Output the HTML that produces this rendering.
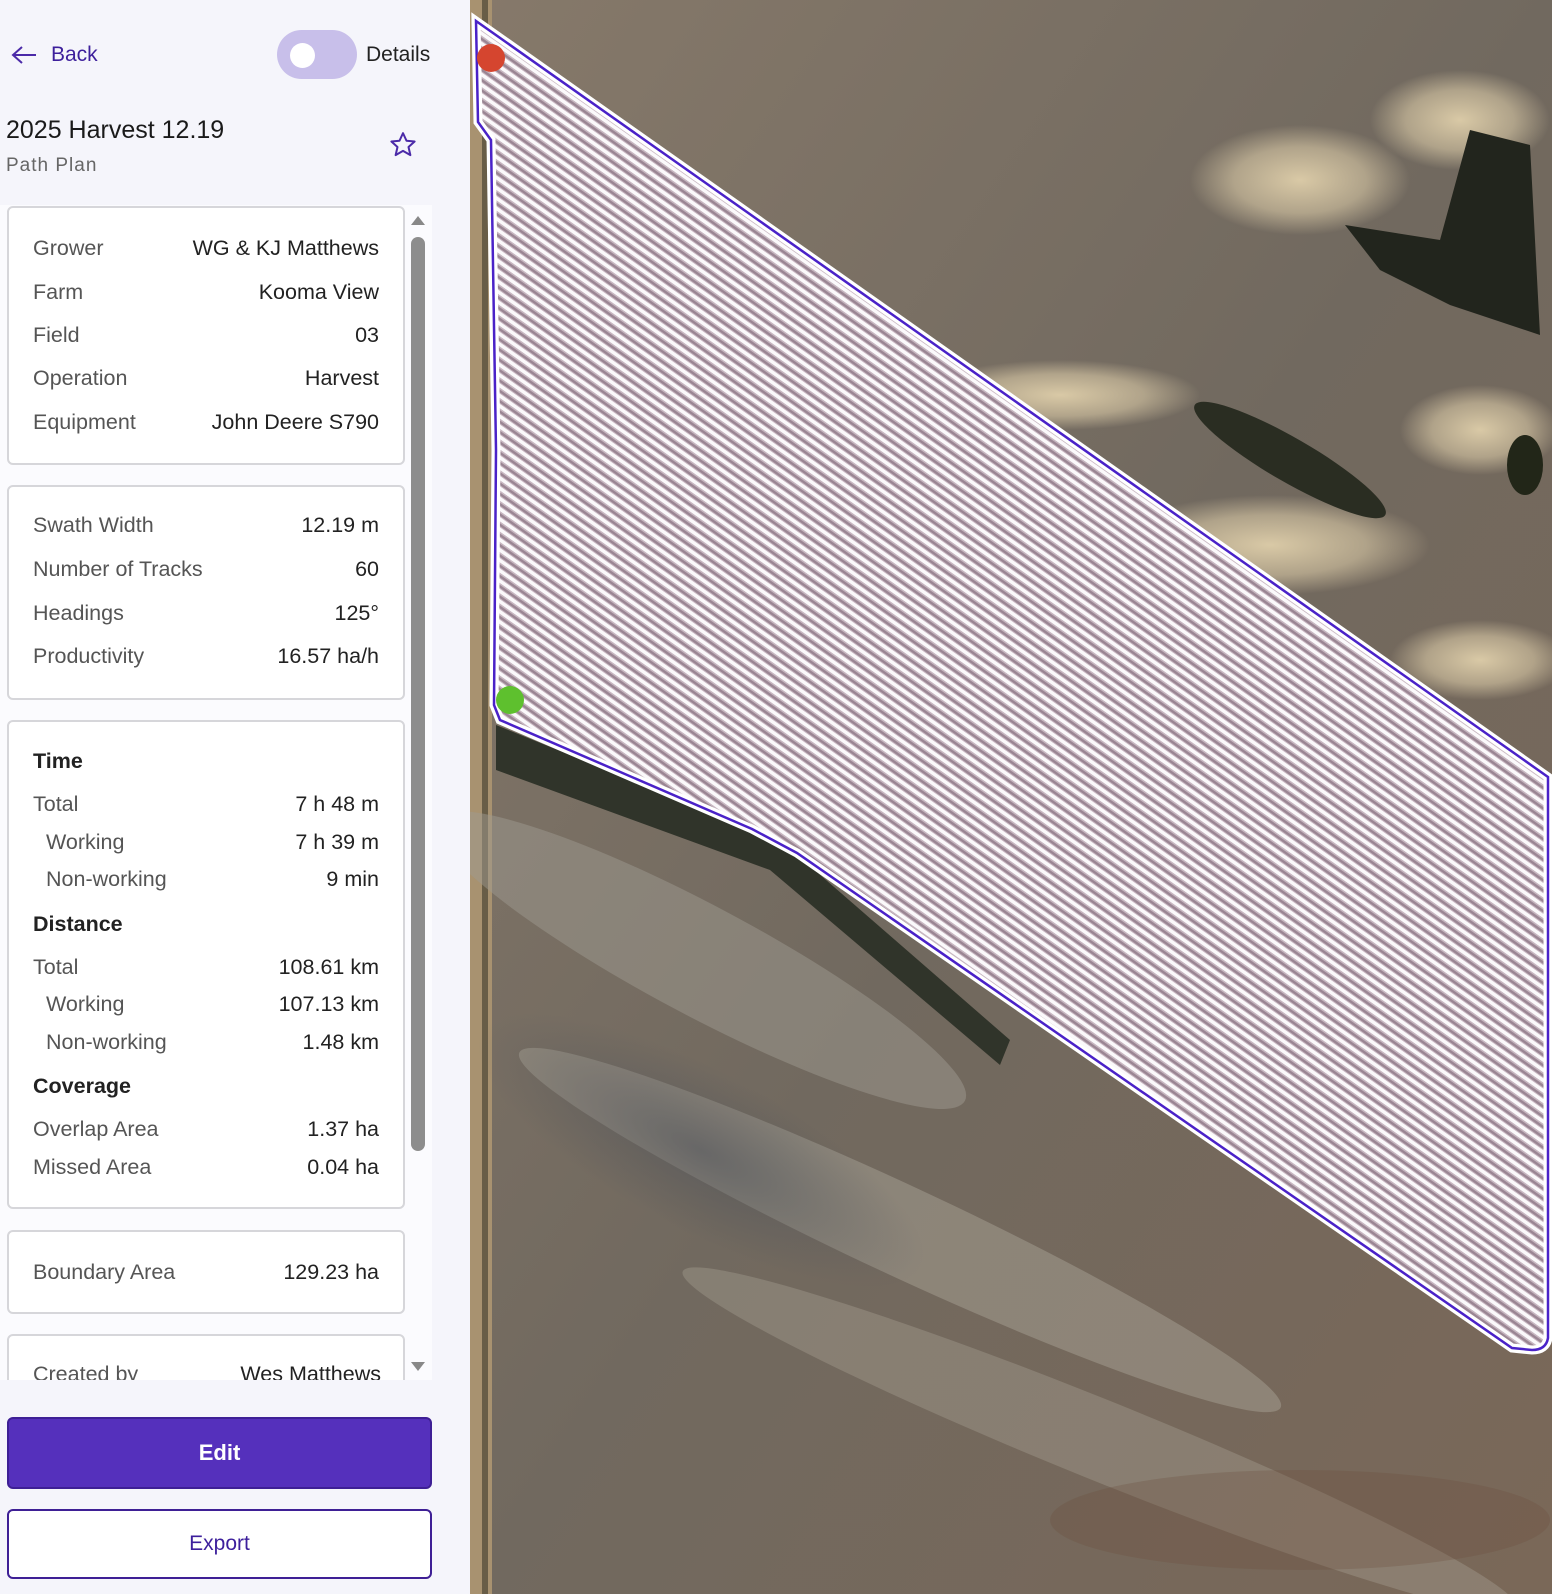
<!DOCTYPE html>
<html><head><meta charset="utf-8"><style>
*{margin:0;padding:0;box-sizing:border-box}
body{width:1552px;height:1594px;overflow:hidden;background:#f5f5fb;font-family:"Liberation Sans",sans-serif;position:relative}
.panel{position:absolute;left:0;top:0;width:470px;height:1594px;background:#f5f5fb}
.t{position:absolute;font-size:21.5px;white-space:nowrap;line-height:1}
.l{left:33px;color:#555}
.li{left:46px;color:#555}
.h{left:33px;color:#222;font-weight:bold}
.v{right:91px;color:#222;text-align:right}
.card{position:absolute;left:7px;width:398px;background:#fff;border:2px solid #d6d6da;border-radius:6px}
.map{position:absolute;left:470px;top:0;width:1082px;height:1594px;overflow:hidden}
</style></head><body>
<div class="panel">
  <svg style="position:absolute;left:10px;top:45px" width="28" height="20" viewBox="0 0 28 20"><path d="M12 2 L3 10 L12 18 M3 10 H26" stroke="#4b2aa8" stroke-width="2" fill="none"/></svg>
  <div class="t" style="left:51px;top:44px;color:#3d1f9c;font-size:21px">Back</div>
  <div style="position:absolute;left:277px;top:30px;width:80px;height:49px;border-radius:25px;background:#c8bfea"></div>
  <div style="position:absolute;left:290px;top:43px;width:25px;height:25px;border-radius:50%;background:#fff"></div>
  <div class="t" style="left:366px;top:44px;color:#222;font-size:21px">Details</div>
  <div class="t" style="left:6px;top:118px;color:#1a1a1a;font-size:25px">2025 Harvest 12.19</div>
  <div class="t" style="left:6px;top:156px;color:#666;font-size:19px;letter-spacing:1px">Path Plan</div>
  <svg style="position:absolute;left:388px;top:130px" width="30" height="30" viewBox="0 0 24 24"><path d="M12 2.5 L14.8 8.6 L21.3 9.2 L16.4 13.6 L17.9 20.1 L12 16.7 L6.1 20.1 L7.6 13.6 L2.7 9.2 L9.2 8.6 Z" fill="none" stroke="#4b2aa8" stroke-width="1.6" stroke-linejoin="round"/></svg>

  <div style="position:absolute;left:0;top:205px;width:432px;height:1175px;background:#fbfbfe;overflow:hidden">
    <div class="card" style="top:1px;height:259px"></div>
    <div class="card" style="top:280px;height:215px"></div>
    <div class="card" style="top:515px;height:489px"></div>
    <div class="card" style="top:1025px;height:84px"></div>
    <div class="card" style="top:1129px;height:100px"></div>
    <svg style="position:absolute;left:410px;top:8px" width="16" height="14"><path d="M1 12 L8 3 L15 12Z" fill="#888"/></svg>
    <div style="position:absolute;left:411px;top:32px;width:14px;height:914px;border-radius:7px;background:#8d8d8d"></div>
    <svg style="position:absolute;left:410px;top:1155px" width="16" height="14"><path d="M1 2 L8 11 L15 2Z" fill="#888"/></svg>
  </div>

  <div class="t l" style="top:238px">Grower</div><div class="t v" style="top:238px">WG &amp; KJ Matthews</div>
  <div class="t l" style="top:282px">Farm</div><div class="t v" style="top:282px">Kooma View</div>
  <div class="t l" style="top:325px">Field</div><div class="t v" style="top:325px">03</div>
  <div class="t l" style="top:368px">Operation</div><div class="t v" style="top:368px">Harvest</div>
  <div class="t l" style="top:412px">Equipment</div><div class="t v" style="top:412px">John Deere S790</div>

  <div class="t l" style="top:515px">Swath Width</div><div class="t v" style="top:515px">12.19 m</div>
  <div class="t l" style="top:559px">Number of Tracks</div><div class="t v" style="top:559px">60</div>
  <div class="t l" style="top:603px">Headings</div><div class="t v" style="top:603px">125°</div>
  <div class="t l" style="top:646px">Productivity</div><div class="t v" style="top:646px">16.57 ha/h</div>

  <div class="t h" style="top:751px">Time</div>
  <div class="t l" style="top:794px">Total</div><div class="t v" style="top:794px">7 h 48 m</div>
  <div class="t li" style="top:832px">Working</div><div class="t v" style="top:832px">7 h 39 m</div>
  <div class="t li" style="top:869px">Non-working</div><div class="t v" style="top:869px">9 min</div>
  <div class="t h" style="top:914px">Distance</div>
  <div class="t l" style="top:957px">Total</div><div class="t v" style="top:957px">108.61 km</div>
  <div class="t li" style="top:994px">Working</div><div class="t v" style="top:994px">107.13 km</div>
  <div class="t li" style="top:1032px">Non-working</div><div class="t v" style="top:1032px">1.48 km</div>
  <div class="t h" style="top:1076px">Coverage</div>
  <div class="t l" style="top:1119px">Overlap Area</div><div class="t v" style="top:1119px">1.37 ha</div>
  <div class="t l" style="top:1157px">Missed Area</div><div class="t v" style="top:1157px">0.04 ha</div>

  <div class="t l" style="top:1262px">Boundary Area</div><div class="t v" style="top:1262px">129.23 ha</div>
  <div style="position:absolute;left:0;top:1362px;width:432px;height:18px;overflow:hidden">
    <div class="t l" style="top:2px">Created by</div><div class="t v" style="top:2px;right:51px">Wes Matthews</div>
  </div>

  <div style="position:absolute;left:7px;top:1417px;width:425px;height:72px;background:#5530bc;border:2px solid #3e1f95;border-radius:6px;color:#fff;font-size:22px;font-weight:bold;text-align:center;line-height:68px">Edit</div>
  <div style="position:absolute;left:7px;top:1509px;width:425px;height:70px;background:#fff;border:2px solid #3e1f95;border-radius:6px;color:#3d1f9c;font-size:21px;text-align:center;line-height:66px">Export</div>
</div>

<div class="map">
<svg width="1082" height="1594" viewBox="470 0 1082 1594">
<defs>
  <radialGradient id="g1" cx="0.5" cy="0.5" r="0.5"><stop offset="0" stop-color="#d9c9a6"/><stop offset="0.6" stop-color="#d9c9a6" stop-opacity="0.6"/><stop offset="1" stop-color="#d9c9a6" stop-opacity="0"/></radialGradient>
  <radialGradient id="g2" cx="0.5" cy="0.5" r="0.5"><stop offset="0" stop-color="#4f535a"/><stop offset="1" stop-color="#4f535a" stop-opacity="0"/></radialGradient>
  <linearGradient id="bg" x1="0" y1="0" x2="1" y2="1"><stop offset="0" stop-color="#86796a"/><stop offset="0.5" stop-color="#71695f"/><stop offset="1" stop-color="#7a6858"/></linearGradient>
  <pattern id="st" width="20" height="8.4" patternUnits="userSpaceOnUse" patternTransform="rotate(35.2)">
    <rect width="20" height="8.4" fill="#9a8593"/>
    <rect y="0" width="20" height="3.6" fill="#fbf9fb"/>
    <rect y="3.6" width="20" height="1.4" fill="#c9b8c2"/>
    <rect y="7.4" width="20" height="1" fill="#c9b8c2"/>
  </pattern>
</defs>
<rect x="470" y="0" width="1082" height="1594" fill="url(#bg)"/>
<rect x="470" y="0" width="22" height="1594" fill="#a89270"/>
<rect x="482" y="0" width="6" height="1594" fill="#3e3a2c" opacity="0.6"/>
<ellipse cx="1300" cy="180" rx="110" ry="55" fill="url(#g1)"/>
<ellipse cx="1460" cy="120" rx="90" ry="50" fill="url(#g1)"/>
<ellipse cx="1270" cy="545" rx="160" ry="50" fill="url(#g1)"/>
<ellipse cx="1480" cy="430" rx="80" ry="45" fill="url(#g1)"/>
<ellipse cx="1480" cy="660" rx="90" ry="40" fill="url(#g1)"/>
<ellipse cx="1060" cy="395" rx="140" ry="35" fill="url(#g1)"/>
<path d="M1470 130 L1530 145 L1540 335 L1450 305 L1380 270 L1345 225 L1440 240 Z" fill="#22251d"/>
<ellipse cx="1290" cy="460" rx="110" ry="22" transform="rotate(30 1290 460)" fill="#2a2d22"/>
<ellipse cx="1525" cy="465" rx="18" ry="30" fill="#222618"/>
<path d="M496 725 L780 840 L1010 1040 L1000 1065 L770 870 L496 770 Z" fill="#30342a"/>
<ellipse cx="700" cy="960" rx="300" ry="55" transform="rotate(28 700 960)" fill="#9d9a90" opacity="0.5"/>
<ellipse cx="900" cy="1230" rx="420" ry="45" transform="rotate(25 900 1230)" fill="#b4b0a2" opacity="0.4"/>
<ellipse cx="1100" cy="1440" rx="450" ry="40" transform="rotate(22 1100 1440)" fill="#b0aa9c" opacity="0.35"/>
<ellipse cx="700" cy="1150" rx="250" ry="80" transform="rotate(28 700 1150)" fill="url(#g2)" opacity="0.6"/>
<ellipse cx="1300" cy="1520" rx="250" ry="50" fill="#6e5040" opacity="0.3"/>
<path d="M476 21 L1548 777 L1548 1338 Q1546 1350 1532 1350 L1512 1348 L797 853 L752 829 L500 720 L494 705 L496 450 L491 140 L478 122 Z" fill="url(#st)" stroke="#fff" stroke-width="9"/>
<path d="M476 21 L1548 777 L1548 1338 Q1546 1350 1532 1350 L1512 1348 L797 853 L752 829 L500 720 L494 705 L496 450 L491 140 L478 122 Z" fill="none" stroke="#4a22c8" stroke-width="2.5"/>
<circle cx="491" cy="58" r="14" fill="#d5452f"/>
<circle cx="510" cy="700" r="14" fill="#5ec02e"/>
</svg>
</div>
</body></html>
